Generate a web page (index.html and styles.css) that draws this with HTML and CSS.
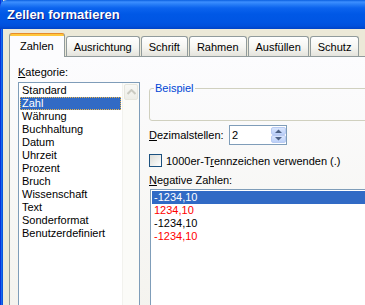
FILE: index.html
```html
<!DOCTYPE html>
<html>
<head>
    <meta charset="utf-8">
    <link rel="stylesheet" href="styles.css">
</head>
<body>
<div class="window">
    <div class="titlebar">
        <span class="title">Zellen formatieren</span>
    </div>
    <div class="client">
        <div class="tabs">
            <div class="tab active">Zahlen</div>
            <div class="tab">Ausrichtung</div>
            <div class="tab">Schrift</div>
            <div class="tab">Rahmen</div>
            <div class="tab">Ausfüllen</div>
            <div class="tab">Schutz</div>
        </div>
        <div class="panel">
            <div class="col-left">
                <div class="label label-cat"><u>K</u>ategorie:</div>
                <div class="listbox">
                    <ul class="items">
                        <li>Standard</li>
                        <li class="sel focus">Zahl</li>
                        <li>Währung</li>
                        <li>Buchhaltung</li>
                        <li>Datum</li>
                        <li>Uhrzeit</li>
                        <li>Prozent</li>
                        <li>Bruch</li>
                        <li>Wissenschaft</li>
                        <li>Text</li>
                        <li>Sonderformat</li>
                        <li>Benutzerdefiniert</li>
                    </ul>
                    <div class="scrollbar">
                        <div class="sb-button">
                            <svg viewBox="0 0 9 6" width="9" height="6">
                                <path d="M0.5 5L4.5 1L8.5 5" fill="none" stroke="currentColor" stroke-width="2"/>
                            </svg>
                        </div>
                    </div>
                </div>
            </div>
            <div class="col-right">
                <fieldset class="group">
                    <legend>Beispiel</legend>
                </fieldset>
                <div class="row-dec">
                    <span class="dec-label"><u>D</u>ezimalstellen:</span>
                    <div class="spin">
                        <span class="spin-value">2</span>
                        <div class="spin-buttons">
                            <div class="spin-btn">
                                <svg viewBox="0 0 7 4" width="7" height="4"><path d="M0 4L3.5 0.5L7 4Z" fill="currentColor"/></svg>
                            </div>
                            <div class="spin-btn">
                                <svg viewBox="0 0 7 4" width="7" height="4"><path d="M0 0L3.5 3.5L7 0Z" fill="currentColor"/></svg>
                            </div>
                        </div>
                    </div>
                </div>
                <div class="row-check">
                    <span class="checkbox"></span>
                    <span>1000er-T<u>r</u>ennzeichen verwenden (.)</span>
                </div>
                <div class="label label-neg"><u>N</u>egative Zahlen:</div>
                <div class="listbox listbox-neg">
                    <ul class="items">
                        <li class="sel">-1234,10</li>
                        <li class="red">1234,10</li>
                        <li>-1234,10</li>
                        <li class="red">-1234,10</li>
                    </ul>
                </div>
            </div>
        </div>
    </div>
</div>
</body>
</html>
```

FILE: styles.css
```css
* {
    margin: 0;
    padding: 0;
    box-sizing: border-box;
}

body {
    background: #ECE9D8;
    font-family: "Liberation Sans", Arial, sans-serif;
    font-size: 11px;
    color: #000;
}

u {
    text-decoration: underline;
    text-underline-offset: 1px;
}

.window {
    width: 365px;
    height: 305px;
    overflow: hidden;
    display: flex;
    flex-direction: column;
    background: linear-gradient(to right,
            #0831D9 0, #0831D9 1px,
            #166AEE 1px, #166AEE 2px,
            #0855DD 2px, #0855DD 3px,
            #ECE9D8 3px);
}

/* XP caption */
.titlebar {
    height: 29px;
    flex-shrink: 0;
    display: flex;
    align-items: center;
    padding: 0 0 1px 7px;
    border-top-left-radius: 7px;
    background: linear-gradient(to bottom,
            #0A5FE0 0, #3D8FFF 2px, #2A80F8 4px,
            #0B63EE 8px, #0058E6 14px, #0055E3 22px,
            #0050DC 26px, #0042C6 29px);
}

.title {
    color: #fff;
    font-weight: bold;
    font-size: 13px;
    text-shadow: 1px 1px #0A1883;
}

.client {
    flex: 1;
    margin-left: 3px;
    padding: 4px 0 0 6px;
    background: #ECE9D8;
}

/* tabs */
.tabs {
    display: flex;
    align-items: flex-end;
    height: 23px;
    gap: 1px;
}

.tab {
    height: 20px;
    padding: 0 7px;
    line-height: 20px;
    border: 1px solid #919B9C;
    border-bottom: none;
    border-radius: 3px 3px 0 0;
    background: linear-gradient(#FFFFFF, #F5F5F1 55%, #E4E3DC);
    white-space: nowrap;
}

.tab.active {
    position: relative;
    z-index: 1;
    height: 24px;
    margin-bottom: -1px;
    padding: 2px 10px 0;
    border-top-color: #E68B2C;
    background: linear-gradient(#FFC73C 0, #FFC73C 2px, #FCFCFE 2px);
}

.panel {
    width: 420px;
    height: 260px;
    display: flex;
    gap: 9px;
    padding: 9px 0 0 8px;
    border: 1px solid #919B9C;
    background: linear-gradient(#FCFCFE, #F4F3EE);
}

.label {
    height: 13px;
    line-height: 13px;
}

.col-left {
    width: 122px;
    flex-shrink: 0;
}

.label-cat {
    margin-bottom: 3px;
}

/* list boxes */
.listbox {
    display: flex;
    height: 240px;
    border: 1px solid #7F9DB9;
    background: #fff;
}

.items {
    flex: 1;
    list-style: none;
    padding: 1px;
}

.items li {
    height: 13px;
    line-height: 13px;
    padding-left: 2px;
    white-space: nowrap;
}

.items li.sel {
    background: #316AC5;
    color: #fff;
}

.items li.focus {
    outline: 1px dotted #E9B54A;
    outline-offset: -1px;
}

.items li.red {
    color: #FF0000;
}

.scrollbar {
    width: 17px;
    flex-shrink: 0;
    background: #FBFBF8;
    border-left: 1px solid #F2F2EE;
    padding: 1px 1px 0 1px;
}

.sb-button {
    height: 16px;
    display: flex;
    align-items: center;
    justify-content: center;
    border: 1px solid #E6E6DE;
    border-radius: 2px;
    background: linear-gradient(#F8F8F5, #EDEDE7);
    color: #CACAC1;
}

/* right side */
.col-right {
    flex: 1;
    padding-top: 16px;
}

.group {
    height: 39px;
    border: 1px solid #D0D0BF;
    border-radius: 3px;
    padding: 0;
}

.group legend {
    margin-left: 4px;
    padding: 0 1px;
    line-height: 13px;
    color: #0046D5;
}

.row-dec {
    display: flex;
    align-items: center;
    height: 20px;
    margin-top: 4px;
}

.dec-label {
    width: 80px;
}

.spin {
    width: 58px;
    height: 20px;
    display: flex;
    border: 1px solid #7F9DB9;
    background: #fff;
}

.spin-value {
    flex: 1;
    padding-left: 2px;
    line-height: 18px;
}

.spin-buttons {
    width: 15px;
    margin: 1px 0;
    display: flex;
    flex-direction: column;
}

.spin-btn {
    flex: 1;
    display: flex;
    align-items: center;
    justify-content: center;
    border: 1px solid #B9CBF3;
    border-radius: 2px;
    background: linear-gradient(#D9E5FD, #BCD0F8);
    color: #4D6185;
}

.row-check {
    display: flex;
    align-items: center;
    gap: 4px;
    height: 13px;
    margin-top: 9px;
}

.checkbox {
    width: 13px;
    height: 13px;
    border: 1px solid #1C5180;
    background: linear-gradient(135deg, #DCDCD7, #FFFFFF);
}

.label-neg {
    margin-top: 7px;
    margin-bottom: 2px;
}

.listbox-neg {
    margin-left: 1px;
}
```
